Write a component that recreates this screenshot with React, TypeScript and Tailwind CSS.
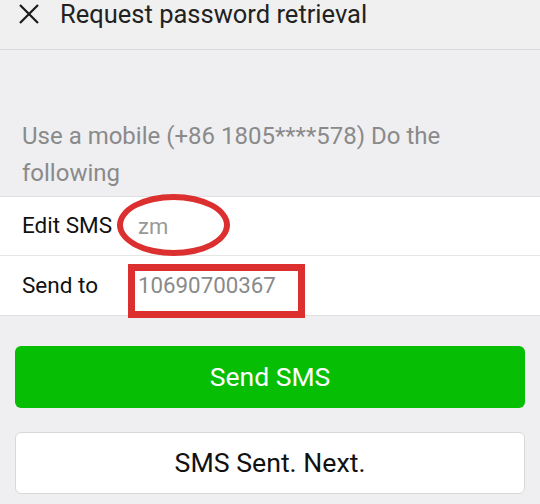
import React from "react";

export default function App() {
  return (
    <div
      className="w-[540px] h-[504px] overflow-hidden bg-[#efeff2] relative"
      style={{ fontFamily: "Roboto, 'Noto Sans', sans-serif" }}
    >
      {/* Header */}
      <div className="h-[50px] bg-[#eff0ef] border-b border-[#d9d9d9] flex items-start">
        <div className="w-[60px] flex justify-center pt-[4px]">
          <svg width="20" height="20" viewBox="0 0 20 20" className="ml-[-2px]">
            <path d="M1 1 L19 19 M19 1 L1 19" stroke="#1a1a1a" strokeWidth="2.2" fill="none" />
          </svg>
        </div>
        <div className="text-[25.5px] leading-[29px] text-[#222]">Request password retrieval</div>
      </div>

      {/* Description */}
      <div className="pt-[68px] px-[22px] text-[24px] leading-[37px] text-[#8a8a8a] h-[146px]">
        Use a mobile (+86 1805****578) Do the following
      </div>

      {/* Panel */}
      <div className="bg-white border-t border-b border-[#e0e0e0] relative">
        <div className="h-[59px] flex items-center pl-[22px] border-b border-[#e5e5e5]">
          <span className="text-[22.5px] text-[#111] w-[116px]">Edit SMS</span>
          <span className="text-[22px] text-[#999]">zm</span>
        </div>
        <div className="h-[59px] flex items-center pl-[22px]">
          <span className="text-[22.5px] text-[#111] w-[116px]">Send to</span>
          <span className="text-[22.3px] text-[#8a8a8a]">10690700367</span>
        </div>
        {/* Annotations */}
        <div className="absolute left-[117px] top-[-3px] w-[113px] h-[62px] rounded-[50%] border-[6px] border-[#dc2f2f]" />
        <div className="absolute left-[128px] top-[67px] w-[177px] h-[54px] border-[7px] border-[#dc2f2f]" />
      </div>

      {/* Buttons */}
      <div className="px-[15px] pt-[30px] flex flex-col gap-[24px]">
        <div className="h-[62px] rounded-[6px] bg-[#06be04] flex items-center justify-center text-white text-[26.5px]">
          Send SMS
        </div>
        <div className="h-[62px] rounded-[6px] bg-white border border-[#d8d8d8] flex items-center justify-center text-[#111] text-[26.7px]">
          SMS Sent. Next.
        </div>
      </div>
    </div>
  );
}
